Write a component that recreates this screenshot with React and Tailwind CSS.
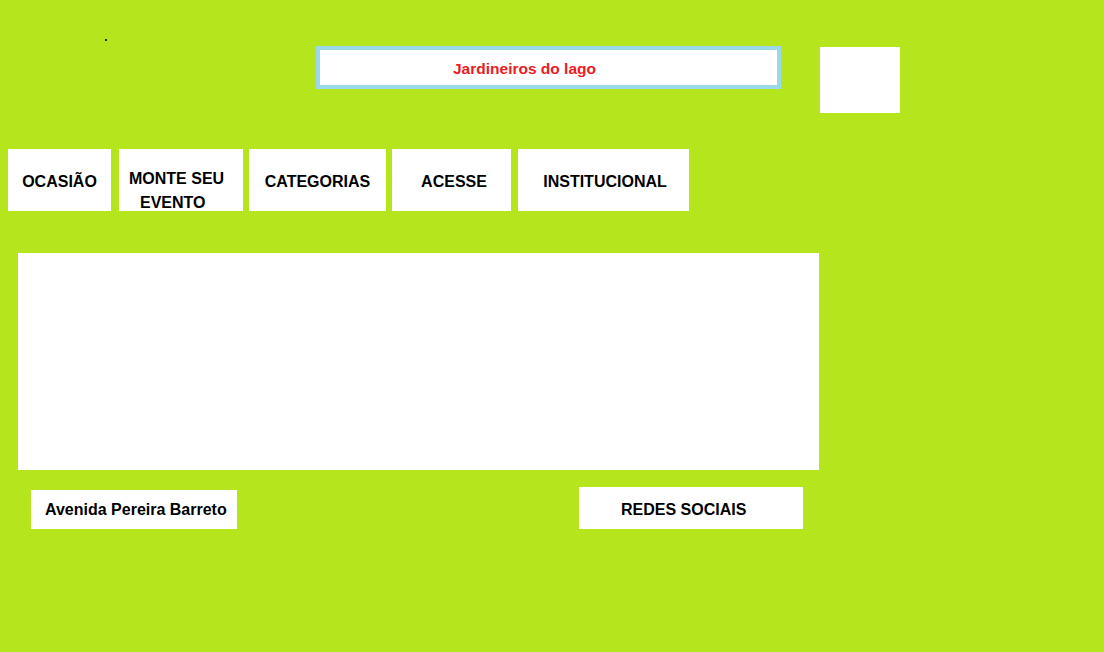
import React from 'react';

const menu = [
  { label: 'OCASIÃO', w: 'w-[103px]', ml: 'ml-0', pad: 'pl-0' },
  { label: 'CATEGORIAS', w: 'w-[137px]', ml: 'ml-[6px]', pad: 'pl-0' },
  { label: 'ACESSE', w: 'w-[119px]', ml: 'ml-[6px]', pad: 'pl-[5px]' },
  { label: 'INSTITUCIONAL', w: 'w-[171px]', ml: 'ml-[7px]', pad: 'pl-[3px]' },
];

const App = () => {
  return (
    <div className="h-[652px] w-full overflow-hidden bg-[#b5e61d] font-['Liberation_Sans',Arial,sans-serif] font-bold text-black">
      <header className="flex items-start pl-[105px] pt-[39px]">
        <span className="h-[2px] w-[2px] bg-black/80" />
        <div className="ml-[209px] mt-[7px] flex h-[43px] w-[465px] items-center border-4 border-[#99d9ea] bg-white pl-[133px] pt-[3px] text-[15.5px] text-[#ed1c24]">
          Jardineiros do lago
        </div>
        <div className="ml-[39px] mt-[8px] h-[66px] w-[80px] bg-white" />
      </header>

      <nav className="mt-[36px] flex pl-[8px] text-[16px]">
        <div className={`flex h-[62px] items-center justify-center bg-white pt-[3px] ${menu[0].w}`}>
          {menu[0].label}
        </div>
        <div className="ml-[8px] h-[62px] w-[124px] bg-white pt-[18px] leading-[24px]">
          <span className="block pl-[10px]">MONTE SEU</span>
          <span className="block pl-[21px]">EVENTO</span>
        </div>
        {menu.slice(1).map((item) => (
          <div
            key={item.label}
            className={`flex h-[62px] items-center justify-center bg-white pt-[3px] ${item.w} ${item.ml} ${item.pad}`}
          >
            {item.label}
          </div>
        ))}
      </nav>

      <main className="ml-[18px] mt-[42px] h-[217px] w-[801px] bg-white" />

      <footer className="mt-[17px] flex items-end text-[16px]">
        <div className="ml-[31px] flex h-[39px] w-[206px] items-center bg-white pl-[14px]">
          Avenida Pereira Barreto
        </div>
        <div className="ml-[342px] flex h-[42px] w-[224px] items-center bg-white pl-[42px] pt-[3px]">
          REDES SOCIAIS
        </div>
      </footer>
    </div>
  );
};

export default App;
